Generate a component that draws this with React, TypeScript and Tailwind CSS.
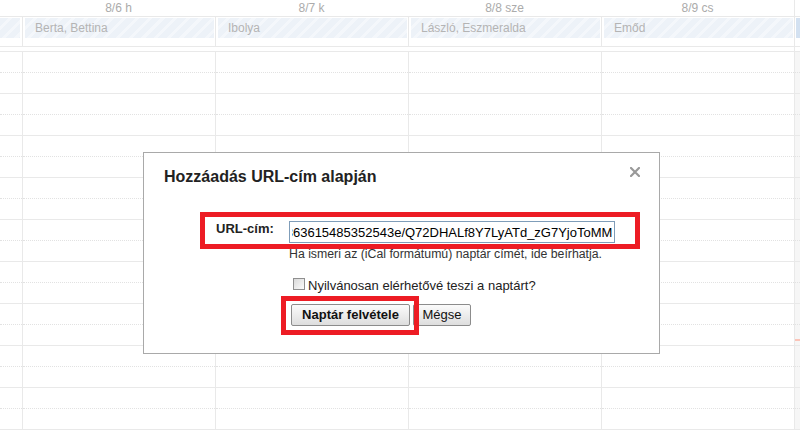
import React, { useEffect, useRef } from "react";

const days = [
  { label: "8/6 h", event: "Berta, Bettina" },
  { label: "8/7 k", event: "Ibolya" },
  { label: "8/8 sze", event: "László, Eszmeralda" },
  { label: "8/9 cs", event: "Emőd" },
];

const ROWS = 9;

const stripes =
  "bg-[#eef3f8] bg-[image:repeating-linear-gradient(135deg,#edf2f8_0px,#edf2f8_6px,#f4f7fb_6px,#f4f7fb_9px)]";

function HourRows() {
  return (
    <>
      {Array.from({ length: ROWS }).map((_, i) => (
        <div key={i} className="h-[42px] border-b border-[#e9e9e9]">
          <div className="h-[21px] border-b border-dotted border-[#e2e2e2]" />
        </div>
      ))}
    </>
  );
}

function Gutter() {
  return (
    <div className="w-[22px] shrink-0 flex flex-col">
      <div className="h-[18px] border-b border-[#e9e9e9]" />
      <div className="h-[33px] border-b border-[#e9e9e9] pt-[1px]">
        <div className={`h-[20px] w-[20px] ${stripes}`} />
      </div>
      <div className="h-[4px]" />
      <div className="border-t border-[#e9e9e9]">
        <HourRows />
      </div>
    </div>
  );
}

function DayColumn({ label, event }: { label: string; event: string }) {
  return (
    <div className="w-[193px] shrink-0 flex flex-col">
      <div className="h-[18px] border-b border-[#e9e9e9] text-center text-[12px] leading-[16px] text-[#ababab]">
        {label}
      </div>
      <div className="h-[33px] border-b border-l border-[#e9e9e9] pt-[1px] pl-[2px]">
        <div className={`h-[20px] w-[189px] pl-[10px] text-[12px] leading-[20px] text-[#b4b4b4] whitespace-nowrap overflow-hidden ${stripes}`}>
          {event}
        </div>
      </div>
      <div className="h-[4px]" />
      <div className="border-t border-l border-[#e9e9e9]">
        <HourRows />
      </div>
    </div>
  );
}

function EdgeColumn() {
  return (
    <div className="flex-1 flex flex-col border-l border-[#e9e9e9]">
      <div className="h-[18px] border-b border-[#e9e9e9]" />
      <div className="h-[33px] border-b border-[#e9e9e9] pt-[1px] pl-[1px]">
        <div className="h-[20px] bg-[#d3e1f1]" />
      </div>
      <div className="h-[4px]" />
      <div className="border-t border-[#e9e9e9] bg-[#f6f6f6]">
        <HourRows />
      </div>
    </div>
  );
}

function AddByUrlDialog() {
  const url =
    "https://www.google.com/calendar/ical/a2b7cfe0c1863615485352543e/Q72DHALf8Y7LyATd_zG7YjoToMM";
  const inputRef = useRef<HTMLInputElement>(null);

  // show the end of the long address, like the caret left at the end
  useEffect(() => {
    const el = inputRef.current;
    if (el) el.scrollLeft = el.scrollWidth;
  }, []);

  return (
    <div className="absolute left-[143px] top-[152px] w-[517px] h-[202px] border border-[#a9a9a9] bg-white">
      {/* Title */}
      <div className="flex items-start justify-between pl-[20px] pr-[19px] pt-[15px]">
        <h2 className="text-[16px] leading-[18px] font-bold text-[#222]">Hozzáadás URL-cím alapján</h2>
        <svg width="10" height="10" viewBox="0 0 10 10" className="-mt-[1px]">
          <path d="M1 1L9 9M9 1L1 9" stroke="#999" strokeWidth="2.2" strokeLinecap="square" />
        </svg>
      </div>

      {/* URL row */}
      <div className="mt-[35px] flex items-start">
        <label className="ml-[72px] w-[73px] text-[13px] leading-[16px] font-bold text-[#222]">URL-cím:</label>
        <input
          ref={inputRef}
          readOnly
          value={url}
          className="w-[326px] h-[22px] border border-[#7f9db9] px-[2px] text-[13px] text-black outline-none font-['Liberation_Sans',Arial,sans-serif]"
        />
      </div>

      <div className="ml-[145px]">
        <p className="mt-[4px] text-[12.3px] leading-[15px] text-[#333]">
          Ha ismeri az (iCal formátumú) naptár címét, ide beírhatja.
        </p>

        <div className="mt-[16px] flex items-start">
          <div className="ml-[4px] w-[12px] h-[12px] border border-[#8f8f8f] bg-gradient-to-br from-[#d9d9d9] to-[#fbfbfb]" />
          <span className="ml-[3px] text-[13px] leading-[16px] text-[#222]">
            Nyilvánosan elérhetővé teszi a naptárt?
          </span>
        </div>

        <div className="mt-[10px] flex gap-[3px] ml-[2px]">
          <button className="w-[119px] h-[22px] rounded-[2px] border border-[#8c8c8c] bg-gradient-to-b from-[#fbfbfb] to-[#dedede] text-[13px] font-bold text-[#111]">
            Naptár felvétele
          </button>
          <button className="w-[58px] h-[22px] rounded-[2px] border border-[#8c8c8c] bg-gradient-to-b from-[#fbfbfb] to-[#dedede] text-[13px] text-[#111]">
            Mégse
          </button>
        </div>
      </div>

      {/* Annotation boxes */}
      <div className="pointer-events-none absolute left-[56px] top-[59px] w-[440px] h-[37px] border-[5px] border-[#ed1c24]" />
      <div className="pointer-events-none absolute left-[137px] top-[143px] w-[138px] h-[39px] border-[5px] border-[#ed1c24]" />
    </div>
  );
}

export default function App() {
  return (
    <div className="relative w-[800px] h-[430px] overflow-hidden bg-white font-['Liberation_Sans',Arial,sans-serif]">
      <div className="flex h-full">
        <Gutter />
        {days.map((d) => (
          <DayColumn key={d.label} label={d.label} event={d.event} />
        ))}
        <EdgeColumn />
      </div>
      {/* current time marker */}
      <div className="absolute left-[795px] top-[339px] w-[5px] h-[2px] bg-[#fbc4b8]" />
      <AddByUrlDialog />
    </div>
  );
}
